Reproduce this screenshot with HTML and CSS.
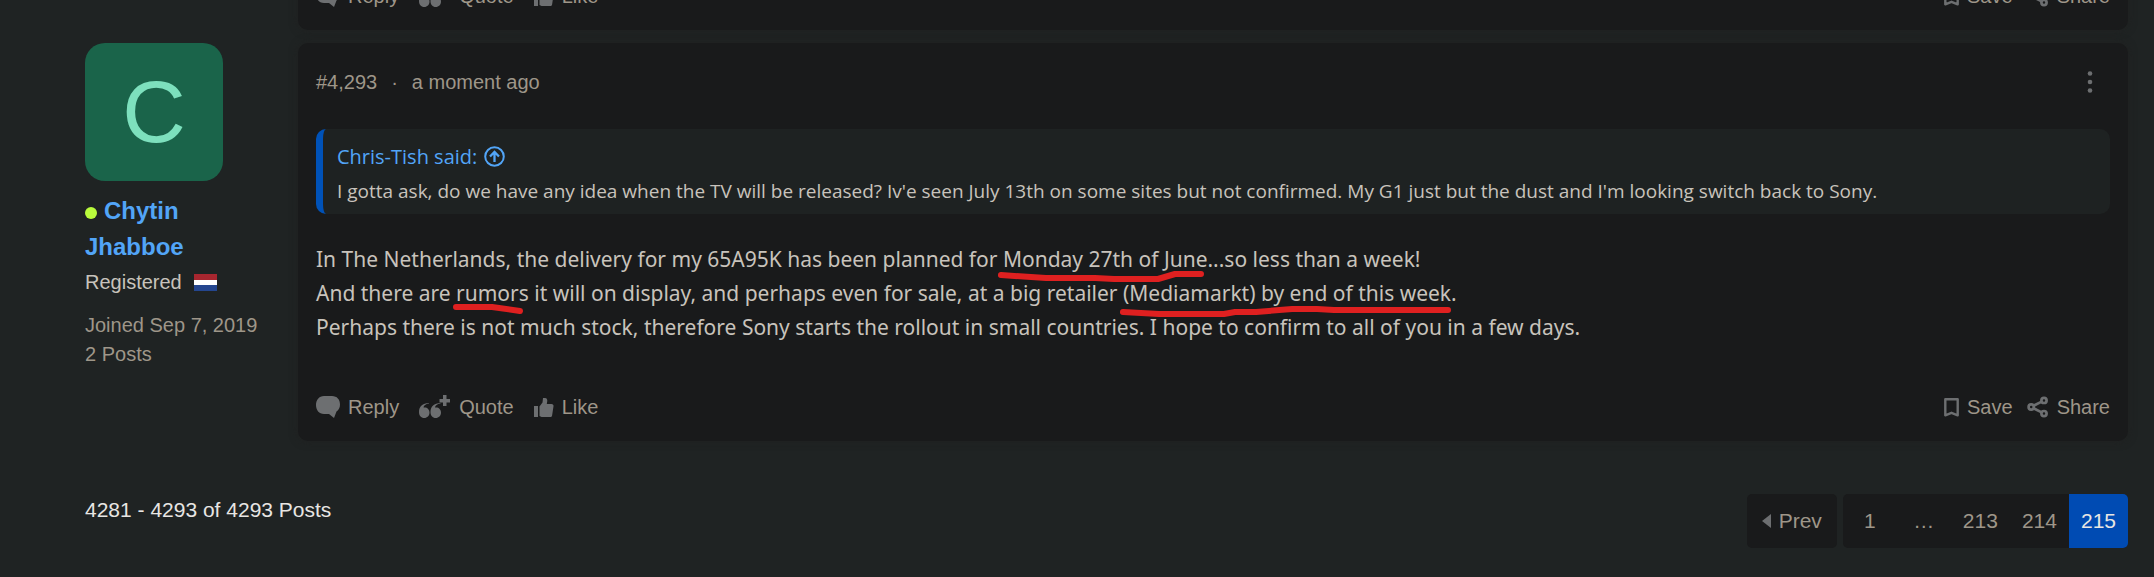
FILE: index.html
```html
<!DOCTYPE html>
<html lang="en">
<head>
  <meta charset="UTF-8">
  <title>Posts 4281 - 4293</title>
  <link rel="stylesheet" href="styles.css">
</head>
<body>
  <!-- shared icons -->
  <svg class="sprite" aria-hidden="true">
    <symbol id="i-reply" viewBox="0 0 24 22"><path d="M8 0h8c5 0 8 3.500 8 8.500 0 3-1.200 5.500-3.500 7L18 22l-5-4H8c-5 0-8-4-8-9S3 0 8 0z"/></symbol>
    <symbol id="i-quote" viewBox="0 0 32 24"><path d="M10 8.500C6.500 9 4.800 10.500 4.500 12.500c3.300-.6 6 1.500 6 5 0 3.200-2.300 5.500-5.200 5.500C2 23 0 20.500 0 17 0 11.500 3.500 8 10 8zM21.500 8.500c-3.500.5-5.200 2-5.500 4 3.300-.6 6 1.500 6 5 0 3.200-2.300 5.500-5.200 5.500-3.300 0-5.300-2.500-5.300-6 0-5.500 3.500-9 10-9z"/><path d="M24 0h3.500v4H31v3.500h-3.500v3.500H24V7.500h-3.500V4H24z"/></symbol>
    <symbol id="i-like" viewBox="0 0 20 19"><path d="M0 8h4v11H0zM5.500 8.500 8.500 4.500 9 0h2c1.600 0 2.300 1.300 2.300 2.800L12.800 6H17.500c1.400 0 2.200 1 2 2.200l-1.400 9.200c-.2 1-.9 1.600-1.900 1.600H7.500l-2-1z"/></symbol>
    <symbol id="i-save" viewBox="0 0 15 19"><path d="M1.300 1.300h12.400v16L7.500 14.800 1.300 17.300z" fill="none" stroke="currentColor" stroke-width="2.400" stroke-linejoin="round"/></symbol>
    <symbol id="i-share" viewBox="0 0 22 22"><g fill="none" stroke="currentColor" stroke-width="2.700"><circle cx="4.200" cy="11" r="2.600"/><circle cx="17" cy="4.400" r="2.600"/><circle cx="17" cy="17.600" r="2.600"/><path d="m6.500 9.800 8.200-4.200M6.500 12.200l8.200 4.200"/></g></symbol>
  </svg>

  <main class="thread">
    <article class="message">
      <div class="user"></div>
      <div class="card">
        <footer class="actions">
          <button type="button"><svg width="24" height="22"><use href="#i-reply"/></svg>Reply</button>
          <button type="button"><svg width="32" height="24"><use href="#i-quote"/></svg>Quote</button>
          <button type="button"><svg width="20" height="19"><use href="#i-like"/></svg>Like</button>
          <div class="actions-right">
            <button type="button"><svg width="15" height="19"><use href="#i-save"/></svg>Save</button>
            <button type="button"><svg width="22" height="22"><use href="#i-share"/></svg>Share</button>
          </div>
        </footer>
      </div>
    </article>

    <article class="message">
      <aside class="user">
        <a class="avatar" href="#">C</a>
        <h4 class="user-name"><span class="online"></span><a href="#">Chytin Jhabboe</a></h4>
        <div class="user-title">Registered
          <svg class="flag" width="23" height="17" viewBox="0 0 23 17" role="img" aria-label="Netherlands"><path fill="#a7262f" d="M0 0h23v6H0z"/><path fill="#fff" d="M0 6h23v5H0z"/><path fill="#24468f" d="M0 11h23v6H0z"/></svg>
        </div>
        <div class="user-stats">
          <div>Joined Sep 7, 2019</div>
          <div>2 Posts</div>
        </div>
      </aside>

      <div class="card">
        <header class="card-head">
          <a href="#">#4,293</a>
          <span>·</span>
          <time>a moment ago</time>
          <button type="button" class="menu" aria-label="More options">
            <svg width="6" height="22" viewBox="0 0 6 22"><circle cx="3" cy="2.500" r="2.300"/><circle cx="3" cy="11" r="2.300"/><circle cx="3" cy="19.500" r="2.300"/></svg>
          </button>
        </header>

        <blockquote class="quote">
          <a class="quote-title" href="#">Chris-Tish said:
            <svg width="21" height="21" viewBox="0 0 21 21" fill="none" stroke="currentColor" stroke-width="2"><circle cx="10.500" cy="10.500" r="9.300"/><path d="M10.500 16V6M6 10.500 10.500 6l4.500 4.500" stroke-width="2.300"/></svg>
          </a>
          <p>I gotta ask, do we have any idea when the TV will be released? Iv'e seen July 13th on some sites but not confirmed. My G1 just but the dust and I'm looking switch back to Sony.</p>
        </blockquote>

        <div class="body">
          In The Netherlands, the delivery for my 65A95K has been planned for <span class="marked">Monday 27th of June<svg width="210" height="14"><path d="M2 4 47 7H96l19 1h44l17-5h26"/></svg></span>...so less than a week!<br>
          And there are <span class="marked">rumors<svg width="76" height="14"><path d="M4 2h36l28 4"/></svg></span> it will on display, and perhaps even for sale, at a big retailer <span class="marked">(Mediamarkt) by end of this week<svg width="336" height="14"><path d="M4 7 40 9h65l11-2h21l36-3h25l17 1h114"/></svg></span>.<br>
          Perhaps there is not much stock, therefore Sony starts the rollout in small countries. I hope to confirm to all of you in a few days.
        </div>

        <footer class="actions">
          <button type="button"><svg width="24" height="22"><use href="#i-reply"/></svg>Reply</button>
          <button type="button"><svg width="32" height="24"><use href="#i-quote"/></svg>Quote</button>
          <button type="button"><svg width="20" height="19"><use href="#i-like"/></svg>Like</button>
          <div class="actions-right">
            <button type="button"><svg width="15" height="19"><use href="#i-save"/></svg>Save</button>
            <button type="button"><svg width="22" height="22"><use href="#i-share"/></svg>Share</button>
          </div>
        </footer>
      </div>
    </article>

    <div class="thread-foot">
      <div class="count">4281 - 4293 of 4293 Posts</div>
      <nav class="pages" aria-label="Pages">
        <a class="prev" href="#"><svg width="9" height="14" viewBox="0 0 9 14"><path d="M9 0v14L0 7z"/></svg>Prev</a>
        <div class="page-list">
          <a href="#">1</a>
          <a href="#">…</a>
          <a href="#">213</a>
          <a href="#">214</a>
          <a class="current" href="#" aria-current="page">215</a>
        </div>
      </nav>
    </div>
  </main>
</body>
</html>
```

FILE: styles.css
```css
* { box-sizing: border-box; }
body { margin: 0; background-color: #1f2323; color: #c8c3bc; font: 20px/28px "Liberation Sans", Arial, sans-serif; overflow: hidden; }
a { color: inherit; text-decoration: none; }
button { display: flex; align-items: center; gap: 8px; padding: 0; border: 0; background: none; color: inherit; font: inherit; cursor: pointer; }
svg { flex: none; fill: #6d6f71; }
.sprite { position: absolute; width: 0; height: 0; }

/* the view starts part way down the thread */
.thread { margin-top: -36px; padding: 0 26px 0 85px; }
.message { display: flex; margin-bottom: 13px; }
.user { width: 213px; padding-right: 38px; flex: none; }
.card { flex: 1; padding: 18px 18px 20px; background-color: #191a1b; border-radius: 10px; box-shadow: 0 0 8px rgba(32, 32, 32, 0.9); }

.avatar { display: flex; align-items: center; justify-content: center; width: 138px; height: 138px; border-radius: 20px; background-color: #1a644a; color: #7de0bd; font-size: 88px; }
.user-name { margin: 12px 0 0; font-size: 24px; line-height: 36px; color: #52a5f7; }
.online { display: inline-block; width: 12px; height: 12px; margin-right: 7px; border-radius: 50%; background-color: #b9fb3c; }
.user-title { display: flex; align-items: center; gap: 12px; line-height: 34px; }
.user-stats { margin-top: 12px; line-height: 29px; color: #9e9689; }

.card-head { display: flex; align-items: center; gap: 14px; height: 42px; color: #9e9689; }
.menu { justify-content: center; width: 40px; height: 42px; margin-left: auto; }

.quote { margin: 26px 0 28px; padding: 10px 14px 6px; border-left: 7px solid #0052b8; border-radius: 10px; background-color: #1e2222; font: 19px/34px "Open Sans", "Noto Sans", sans-serif; }
.quote p { margin: 0; }
.quote-title { display: flex; align-items: center; gap: 7px; font-size: 20px; line-height: 35px; color: #52a5f7; }
.quote-title svg { fill: none; }

.body { font: 21px/34px "Noto Sans", "Open Sans", sans-serif; }
.marked { position: relative; }
/* hand-drawn red strokes under the marked words */
.marked svg { position: absolute; left: -4px; top: calc(100% - 2px); overflow: visible; fill: none; stroke: #df2020; stroke-width: 6px; stroke-linecap: round; stroke-linejoin: round; }

.actions { display: flex; align-items: center; gap: 20px; height: 28px; color: #9e9689; }
.actions svg { color: #6d6f71; }
.actions-right { display: flex; gap: 14px; margin-left: auto; }
.body + .actions { margin-top: 49px; }

.thread-foot { display: flex; justify-content: space-between; margin-top: 53px; font-size: 21px; }
.count { line-height: 32px; color: #e8e6e3; }
.pages { display: flex; gap: 6px; line-height: 54px; color: #9e9689; }
.prev { display: flex; align-items: center; gap: 8px; padding: 0 15px; border-radius: 5px; background-color: #191a1b; }
.page-list { display: flex; overflow: hidden; border-radius: 5px; background-color: #191a1b; }
.page-list a { min-width: 54px; padding: 0 12px; text-align: center; }
.page-list .current { background-color: #004bb3; color: #e8e6e3; }
```
